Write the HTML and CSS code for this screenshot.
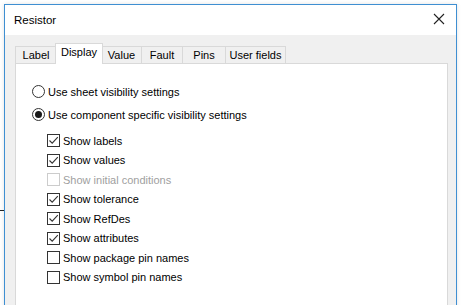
FILE: index.html
```html
<!DOCTYPE html>
<html>
<head>
<meta charset="utf-8">
<link rel="stylesheet" href="styles.css">
</head>
<body>
<div class="dash"></div>
<div class="window">
  <div class="titlebar">
    <span class="title">Resistor</span>
    <svg class="close" width="12" height="12" viewBox="0 0 12 12"><path d="M1 1L11 11M11 1L1 11" stroke="#222" stroke-width="1.1" fill="none"/></svg>
  </div>
  <div class="body">
    <div class="tabs">
      <div class="tab t-label">Label</div>
      <div class="tab t-display selected">Display</div>
      <div class="tab t-value">Value</div>
      <div class="tab t-fault">Fault</div>
      <div class="tab t-pins">Pins</div>
      <div class="tab t-user">User fields</div>
    </div>
    <div class="panel">
      <div class="radio-row first"><span class="radio"></span><span>Use sheet visibility settings</span></div>
      <div class="radio-row"><span class="radio on"></span><span>Use component specific visibility settings</span></div>
      <div class="checks">
        <div class="check-row"><span class="box"><svg width="11" height="11" viewBox="0 0 11 11"><path d="M1.5 5.5L4.2 8.2L9.8 2.2" stroke="#333" stroke-width="1.1" fill="none"/></svg></span><span>Show labels</span></div>
        <div class="check-row"><span class="box"><svg width="11" height="11" viewBox="0 0 11 11"><path d="M1.5 5.5L4.2 8.2L9.8 2.2" stroke="#333" stroke-width="1.1" fill="none"/></svg></span><span>Show values</span></div>
        <div class="check-row disabled"><span class="box"></span><span>Show initial conditions</span></div>
        <div class="check-row"><span class="box"><svg width="11" height="11" viewBox="0 0 11 11"><path d="M1.5 5.5L4.2 8.2L9.8 2.2" stroke="#333" stroke-width="1.1" fill="none"/></svg></span><span>Show tolerance</span></div>
        <div class="check-row"><span class="box"><svg width="11" height="11" viewBox="0 0 11 11"><path d="M1.5 5.5L4.2 8.2L9.8 2.2" stroke="#333" stroke-width="1.1" fill="none"/></svg></span><span>Show RefDes</span></div>
        <div class="check-row"><span class="box"><svg width="11" height="11" viewBox="0 0 11 11"><path d="M1.5 5.5L4.2 8.2L9.8 2.2" stroke="#333" stroke-width="1.1" fill="none"/></svg></span><span>Show attributes</span></div>
        <div class="check-row"><span class="box"></span><span>Show package pin names</span></div>
        <div class="check-row"><span class="box"></span><span>Show symbol pin names</span></div>
      </div>
    </div>
  </div>
</div>
</body>
</html>
```

FILE: styles.css
```css
html, body {
  margin: 0;
  padding: 0;
  background: #ffffff;
  width: 463px;
  height: 305px;
  overflow: hidden;
  position: relative;
}
body {
  font-family: "Liberation Sans", Arial, sans-serif;
  font-size: 11px;
  color: #000;
}
.dash {
  position: absolute;
  left: 0;
  top: 210px;
  width: 4px;
  height: 1px;
  background: #222;
}
.window {
  margin: 4px 0 0 4px;
  width: 451px;
  height: 310px;
  border: 1px solid #3f8fd2;
  border-bottom: none;
  background: #f0f0f0;
  box-shadow: 0 0 4px rgba(0,0,0,0.12);
  display: flex;
  flex-direction: column;
}
.titlebar {
  height: 30px;
  background: #ffffff;
  display: flex;
  align-items: center;
  justify-content: space-between;
  padding: 0 11px 0 9px;
  flex: none;
}
.title {
  font-size: 11.5px;
  color: #000;
}
.close {
  display: block;
  margin-top: -2px;
}
.body {
  flex: 1;
  padding: 8px 8px 0 10px;
  display: flex;
  flex-direction: column;
}
.tabs {
  display: flex;
  align-items: flex-end;
  height: 20px;
  position: relative;
  z-index: 2;
}
.tab {
  height: 16px;
  line-height: 17px;
  border: 1px solid #d9d9d9;
  border-bottom: none;
  background: #f0f0f0;
  text-align: center;
  box-sizing: content-box;
  margin-left: -1px;
  color: #000;
}
.t-label { width: 40px; margin-left: 0; }
.t-display { width: 46px; }
.t-value { width: 39px; }
.t-fault { width: 40px; }
.t-pins { width: 42px; }
.t-user { width: 59px; }
.tab.selected {
  background: #ffffff;
  height: 20px;
  line-height: 17px;
  margin-bottom: -1px;
  margin-left: -2px;
  margin-right: -1px;
  position: relative;
  z-index: 3;
}
.panel {
  flex: 1;
  background: #ffffff;
  border: 1px solid #d9d9d9;
  position: relative;
  z-index: 1;
  padding: 16px 0 0 16px;
}
.radio-row {
  display: flex;
  align-items: center;
  height: 23px;
}
.radio {
  width: 11px;
  height: 11px;
  border: 1px solid #333;
  border-radius: 50%;
  margin-right: 3px;
  position: relative;
  flex: none;
}
.radio.on::after {
  content: "";
  position: absolute;
  left: 2px;
  top: 2px;
  width: 7px;
  height: 7px;
  border-radius: 50%;
  background: #1a1a1a;
}
.checks {
  padding: 5px 0 0 15px;
}
.check-row {
  display: flex;
  align-items: center;
  height: 19.5px;
}
.box {
  width: 11px;
  height: 11px;
  border: 1px solid #333;
  background: #fff;
  margin-right: 3px;
  flex: none;
  display: flex;
  align-items: center;
  justify-content: center;
}
.box svg { display: block; }
.check-row.disabled { color: #a0a0a0; }
.check-row.disabled .box { border-color: #cccccc; }
```
